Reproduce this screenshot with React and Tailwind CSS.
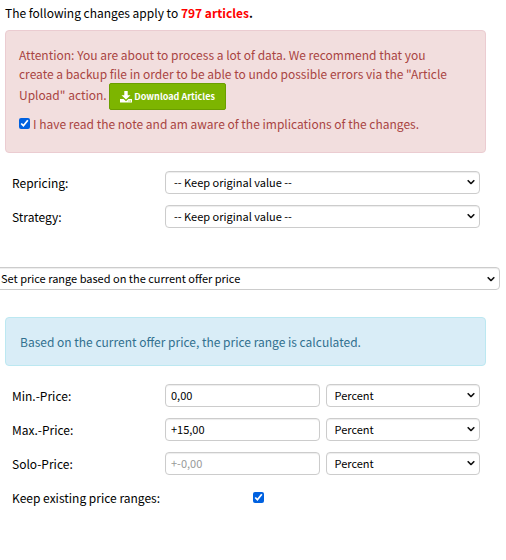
import { useState } from "react";

const fieldStyle =
  "h-[23px] w-full min-w-0 rounded border border-[#cccccc] bg-white text-[11px] leading-[19px] text-black shadow-[inset_0_1px_1px_rgba(0,0,0,0.075)]";

function Row({ label, htmlFor, children }) {
  return (
    <div className="flex items-center h-[34px] pl-3 pr-[26px]">
      <label htmlFor={htmlFor} className="w-[153px] shrink-0 whitespace-nowrap">
        {label}
      </label>
      <div className="flex flex-1 gap-[6px] min-w-0">{children}</div>
    </div>
  );
}

function Select({ className, children, ...props }) {
  return (
    <div className="relative flex flex-1 min-w-0">
      <select {...props} className={`${fieldStyle} appearance-none pr-5 ${className}`}>
        {children}
      </select>
      <svg
        viewBox="0 0 8 5"
        className="pointer-events-none absolute right-[5px] top-1/2 h-[5px] w-2 -translate-y-1/2"
        fill="none"
        stroke="#111111"
        strokeWidth="1.6"
        aria-hidden="true"
      >
        <path d="M0.7 0.7 4 4 7.3 0.7" />
      </svg>
    </div>
  );
}

function KeepSelect({ id }) {
  return (
    <Select id={id} className="pl-2">
      <option>-- Keep original value --</option>
    </Select>
  );
}

function PriceRow({ id, label, value, placeholder }) {
  return (
    <Row label={label} htmlFor={id}>
      <div className="flex flex-1 min-w-0">
        <input
          id={id}
          type="text"
          defaultValue={value}
          placeholder={placeholder}
          className={`${fieldStyle} px-[5px] placeholder:text-[#999999]`}
        />
      </div>
      <Select aria-label={`${label} unit`} className="pl-2">
        <option>Percent</option>
        <option>Absolute</option>
      </Select>
    </Row>
  );
}

function DownloadIcon() {
  return (
    <svg viewBox="0 0 12 12" className="size-3" fill="currentColor" aria-hidden="true">
      <path d="M4.3 0h3.4v4.2h2.8L6 8.6 1.5 4.2h2.8z" />
      <path d="M0 8h3.6L6 10.2 8.4 8H12v3.6H0z" />
      <path d="M8.6 9.6h.8v.8h-.8zM10.2 9.6h.8v.8h-.8z" fill="#7db500" />
    </svg>
  );
}

export default function App() {
  const [confirmed, setConfirmed] = useState(true);
  const [keepRanges, setKeepRanges] = useState(true);

  return (
    <main className="bg-white text-black text-[12px] leading-[19px] font-['Noto_Sans_CJK_SC','Noto_Sans',sans-serif]">
      <p className="pl-[5px] pt-[3px]">
        The following changes apply to <strong className="text-[#ff0000]">797 articles</strong>
        <strong>.</strong>
      </p>

      <div className="mt-2 ml-[5px] mr-5 rounded border border-[#ebccd1] bg-[#f2dede] pt-[14px] pl-[13px] pr-7 pb-[19px] text-[#a94442]">
        <p>
          Attention: You are about to process a lot of data. We recommend that you create a backup
          file in order to be able to undo possible errors via the "Article Upload" action.{" "}
          <button
            type="button"
            className="inline-flex h-[27px] items-center gap-[2px] rounded-xs border border-[#6b9e00] bg-[#7db500] px-[10px] align-middle text-[9px] font-bold text-white"
          >
            <DownloadIcon />
            Download Articles
          </button>
        </p>
        <label className="mt-1 flex items-center gap-[3px]">
          <input
            type="checkbox"
            checked={confirmed}
            onChange={(e) => setConfirmed(e.target.checked)}
            className="size-[11px] accent-[#0061e0]"
          />
          I have read the note and am aware of the implications of the changes.
        </label>
      </div>

      <div className="mt-3">
        <Row label="Repricing:" htmlFor="repricing">
          <KeepSelect id="repricing" />
        </Row>
        <Row label="Strategy:" htmlFor="strategy">
          <KeepSelect id="strategy" />
        </Row>
      </div>

      <div className="-ml-1 mt-[34px] flex pr-[6px]">
        <Select aria-label="Price range mode" className="pl-1">
          <option>Set price range based on the current offer price</option>
        </Select>
      </div>

      <div className="mt-[27px] ml-[5px] mr-5 rounded border border-[#bce8f1] bg-[#d9edf7] px-[14px] py-[14px] text-[#31708f]">
        Based on the current offer price, the price range is calculated.
      </div>

      <div className="mt-3">
        <PriceRow id="min-price" label="Min.-Price:" value="0,00" />
        <PriceRow id="max-price" label="Max.-Price:" value="+15,00" />
        <PriceRow id="solo-price" label="Solo-Price:" placeholder="+-0,00" />
        <Row label="Keep existing price ranges:" htmlFor="keep-ranges">
          <input
            id="keep-ranges"
            type="checkbox"
            checked={keepRanges}
            onChange={(e) => setKeepRanges(e.target.checked)}
            className="ml-[88px] size-[11px] accent-[#0061e0]"
          />
        </Row>
      </div>
    </main>
  );
}
